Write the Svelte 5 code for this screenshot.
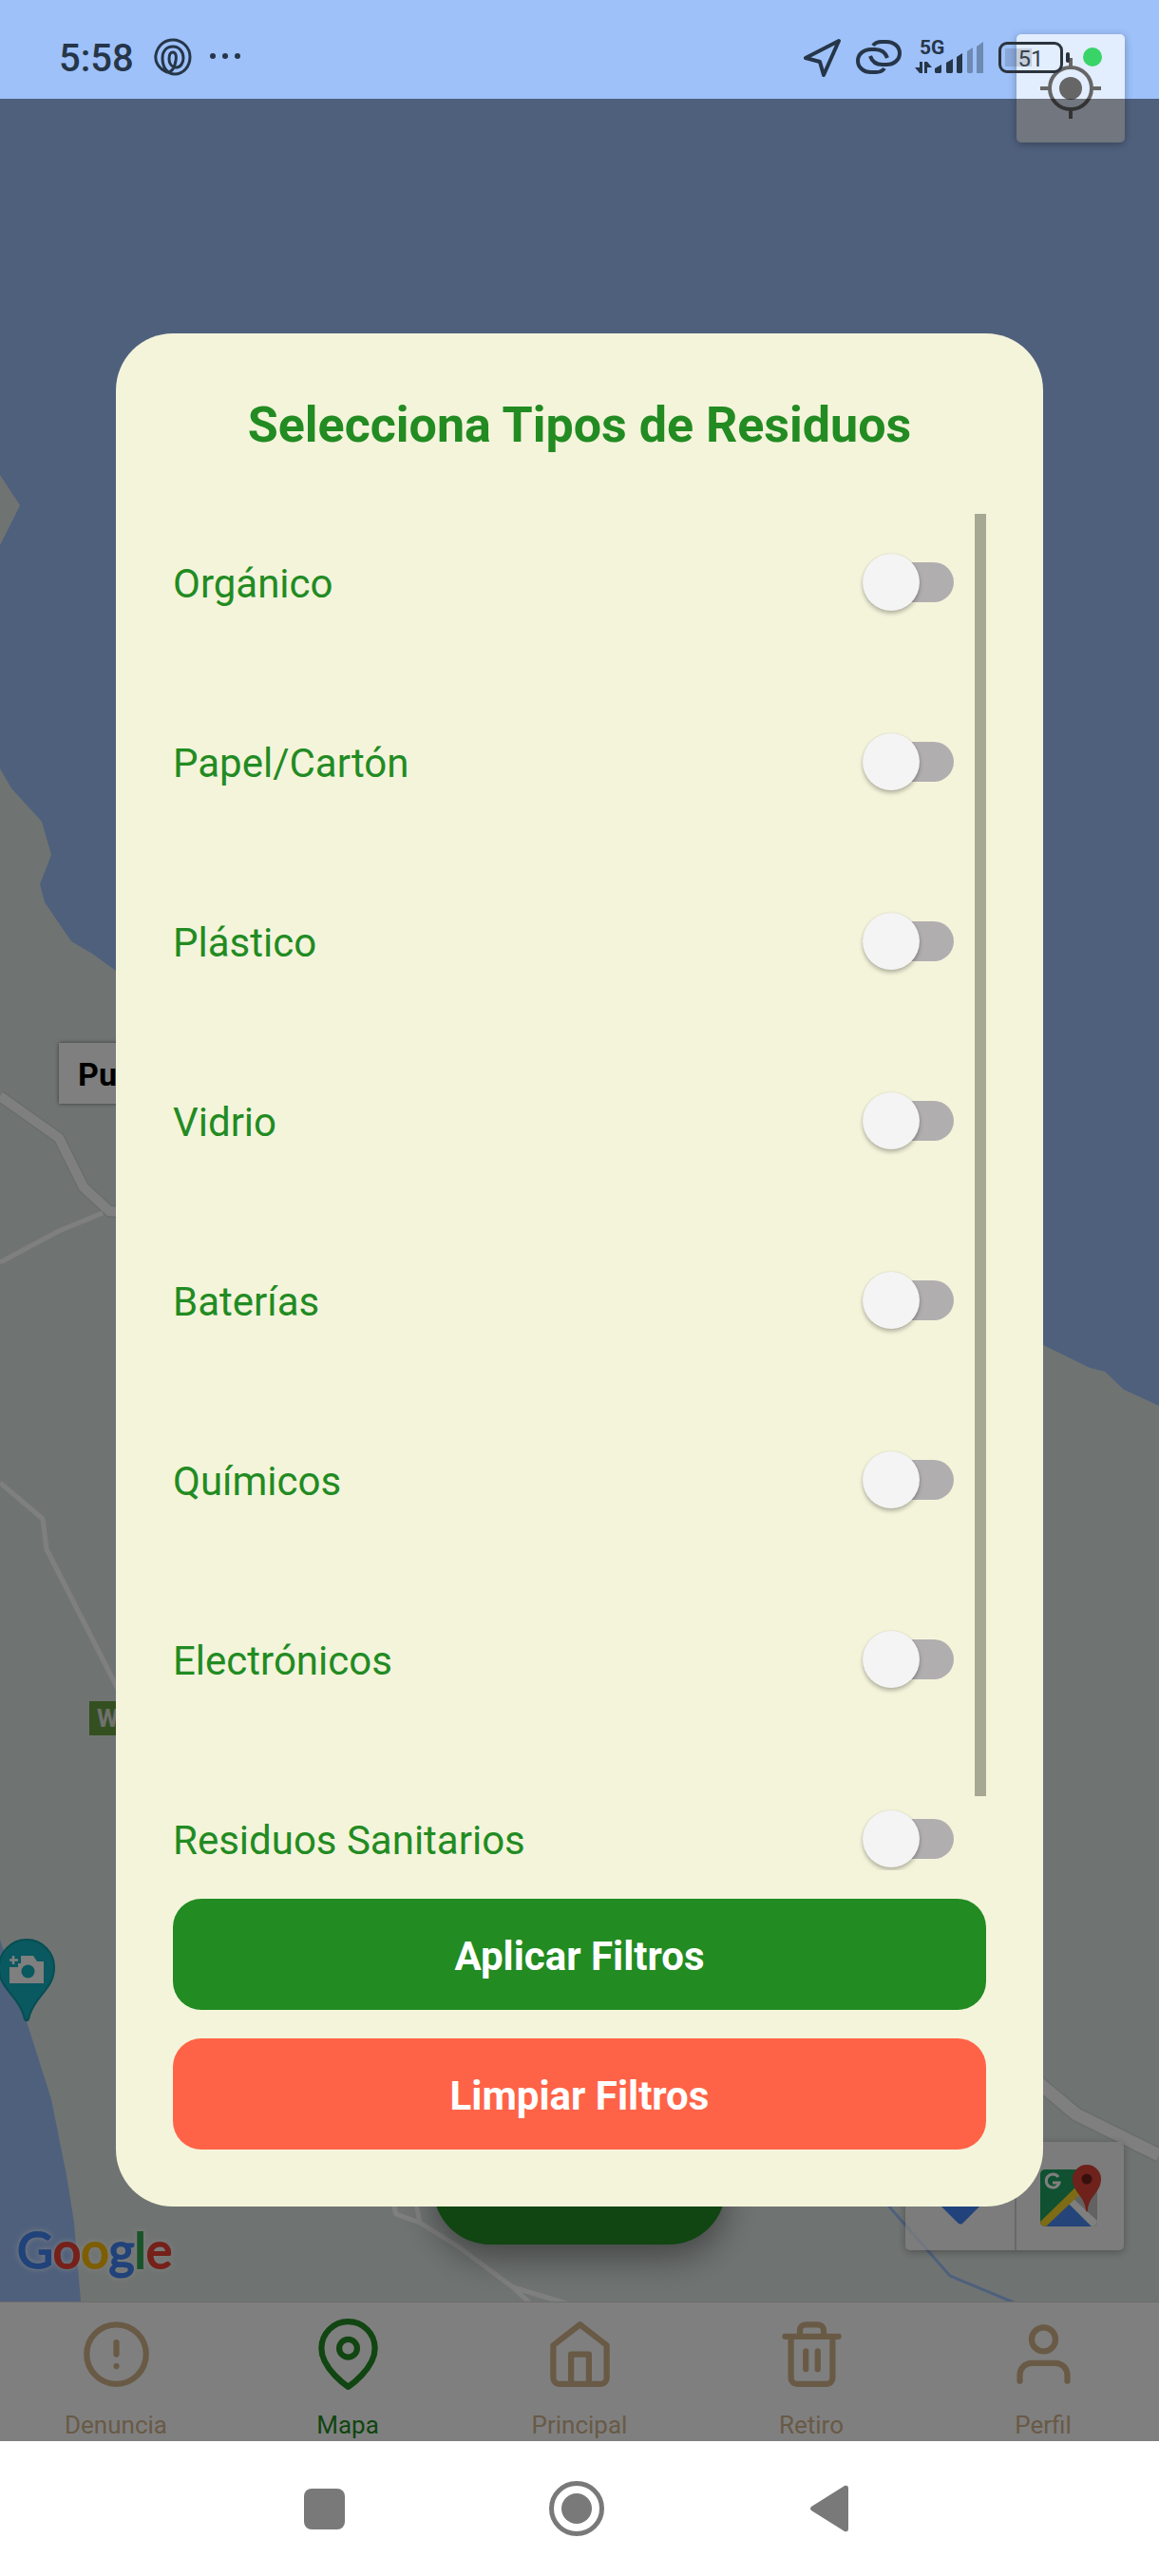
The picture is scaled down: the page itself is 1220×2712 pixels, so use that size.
<script>
  const wasteTypes = [
    'Orgánico',
    'Papel/Cartón',
    'Plástico',
    'Vidrio',
    'Baterías',
    'Químicos',
    'Electrónicos',
    'Residuos Sanitarios'
  ];

  const tabs = [
    { id: 'denuncia', label: 'Denuncia' },
    { id: 'mapa', label: 'Mapa' },
    { id: 'principal', label: 'Principal' },
    { id: 'retiro', label: 'Retiro' },
    { id: 'perfil', label: 'Perfil' }
  ];

  let selected = $state([]);
  let activeTab = $state('mapa');
  let viewHeight = $state(1);
  let contentHeight = $state(1);
  let scrollTop = $state(0);

  let barHeight = $derived(Math.min(100, (viewHeight / contentHeight) * 100));
  let barTop = $derived((scrollTop / contentHeight) * 100);
</script>

<div class="screen">
  <main class="map">
    <svg class="terrain" viewBox="0 0 1220 2423" preserveAspectRatio="xMidYMid slice" aria-hidden="true">
      <rect width="1220" height="2423" fill="#9ec1fa" />
      <g fill="#dfe8e5">
        <path d="M0 500 21 532 0 574Z" />
        <path d="M0 809 12 830 44 865 54 900 42 931 47 950 75 991 97 1004 122 1022 600 1260 1098 1416 1147 1440 1163 1444 1183 1463 1220 1480V2423H0Z" />
      </g>
      <path d="M0 2042 28 2128 54 2210 70 2290 78 2340 85 2423H0Z" fill="#9ec1fa" />
      <path d="M935 2322 1000 2396 1067 2424" fill="none" stroke="#9ec1fa" stroke-width="3" />
      <g fill="none" stroke="#d3dad8" stroke-linejoin="round">
        <path d="M0 1154 62 1198 88 1250 115 1275 135 1277" stroke-width="13" />
        <path d="M1090 2190 1133 2226 1220 2269" stroke-width="16" />
      </g>
      <g fill="none" stroke="#fff" stroke-linejoin="round">
        <path d="M0 1154 62 1198 88 1250 115 1275 135 1277" stroke-width="10" />
        <path d="M1090 2190 1133 2226 1220 2269" stroke-width="13" />
        <path d="M0 1329 62 1296 108 1277M0 1561 45 1599 49 1631 125 1780" stroke-width="5" />
        <path d="M414 2320 417 2331 442 2340 482 2365 540 2408 558 2425M438 2320 442 2340M540 2408 596 2425" stroke-width="5" />
      </g>
      <g>
        <path d="M28 2042a29 29 0 0 1 29 30c0 22-20 29-26 50-1 7-5 7-6 0-6-21-26-28-26-50a29 29 0 0 1 29-30Z" fill="#14b1c0" stroke="#0e9ba5" stroke-width="2" />
        <path fill="#fff" d="M22 2059h13l4 6h7v23H10v-17h9v-4h3Z" />
        <circle cx="29.500" cy="2075.500" r="7" fill="#14b1c0" />
        <path d="M14 2059v9M10 2063.500h9" stroke="#fff" stroke-width="2.500" />
      </g>
      <text x="18" y="2388" class="google"><tspan class="blue">G</tspan><tspan class="red">o</tspan><tspan class="yellow">o</tspan><tspan class="blue">g</tspan><tspan class="green">l</tspan><tspan class="red">e</tspan></text>
    </svg>

    <span class="pin-label">Pu</span>
    <span class="road-sign">W</span>

    <button class="map-card locate" aria-label="Mi ubicación">
      <svg viewBox="0 0 64 64" width="64" height="64" aria-hidden="true">
        <circle cx="32" cy="32" r="22" fill="none" stroke="#666" stroke-width="4" />
        <circle cx="32" cy="32" r="12" fill="#666" />
        <path d="M32 0v9M32 55v9M0 32h9M55 32h9" stroke="#666" stroke-width="4" />
      </svg>
    </button>

    <button class="fab" aria-label="Filtros"></button>

    <div class="map-card links">
      <button aria-label="Cómo llegar">
        <svg viewBox="0 0 60 60" width="60" height="60" aria-hidden="true">
          <path d="M27 2q3-3 6 0l25 25q3 3 0 6L33 58q-3 3-6 0L2 33q-3-3 0-6Z" fill="#4285f4" />
        </svg>
      </button>
      <button aria-label="Abrir en Google Maps">
        <svg viewBox="0 0 68 68" width="68" height="68" aria-hidden="true">
          <rect x="2" y="6" width="60" height="60" rx="5" fill="#1ea362" />
          <path d="M62 12 32 42 56 66q6 0 6-6Z" fill="#c5c5c5" />
          <path d="M32 42 8 66h48Z" fill="#4a89f3" />
          <path d="M32 42 56 66q6 0 6-6L36 36Z" fill="#fff" />
          <path d="M42 22 2 61q0 5 6 5L46 30Z" fill="#fcd72a" />
          <path d="M21 14a7 7 0 1 0 1 6h-7" fill="none" stroke="#fff" stroke-width="3" />
          <path d="M51 1a15 15 0 0 1 15 15c0 14-13 18-14 33q-1 3-2 0C49 34 36 30 36 16A15 15 0 0 1 51 1Z" fill="#dc4437" />
          <circle cx="51" cy="16" r="5.500" fill="#6f211a" />
        </svg>
      </button>
    </div>
  </main>

  <nav class="tabs" aria-label="Secciones">
    {#each tabs as tab}
      <button class:active={tab.id === activeTab} onclick={() => (activeTab = tab.id)}>
        <svg class="tab-icon" viewBox="0 0 24 24" aria-hidden="true">
          {#if tab.id === 'denuncia'}
            <circle cx="12" cy="12" r="10" />
            <path d="M12 8v4M12 16h.01" />
          {:else if tab.id === 'mapa'}
            <path d="M21 10c0 7-9 13-9 13s-9-6-9-13a9 9 0 0 1 18 0z" />
            <circle cx="12" cy="10" r="3" />
          {:else if tab.id === 'principal'}
            <path d="M3 9l9-7 9 7v11a2 2 0 0 1-2 2H5a2 2 0 0 1-2-2z" />
            <path d="M9 22V12h6v10" />
          {:else if tab.id === 'retiro'}
            <path d="M3 6h18M19 6v14a2 2 0 0 1-2 2H7a2 2 0 0 1-2-2V6m3 0V4a2 2 0 0 1 2-2h4a2 2 0 0 1 2 2v2M10 11v6M14 11v6" />
          {:else}
            <path d="M20 21v-2a4 4 0 0 0-4-4H8a4 4 0 0 0-4 4v2" />
            <circle cx="12" cy="7" r="4" />
          {/if}
        </svg>
        <span>{tab.label}</span>
      </button>
    {/each}
  </nav>

  <div class="system-nav">
    <button aria-label="Recientes">
      <svg viewBox="0 0 60 60" width="60" height="60" aria-hidden="true"><rect x="9" y="9" width="43" height="43" rx="8" /></svg>
    </button>
    <button aria-label="Inicio">
      <svg viewBox="0 0 60 60" width="60" height="60" aria-hidden="true">
        <circle cx="30" cy="30" r="16" />
        <circle cx="30" cy="30" r="26.500" fill="none" stroke="#797979" stroke-width="5" />
      </svg>
    </button>
    <button aria-label="Atrás">
      <svg viewBox="0 0 60 60" width="60" height="60" aria-hidden="true"><path d="M11 28 46 6q4-1 4 3v42q0 4-4 3L11 32q-2-2 0-4Z" /></svg>
    </button>
  </div>

  <header class="status">
    <time>5:58</time>
    <svg viewBox="0 0 40 40" width="40" height="40" fill="none" stroke="currentColor" stroke-width="3" aria-hidden="true">
      <path d="M14 36C4 32 1 24 2 18 4 7 12 2 20 2c10 0 18 8 18 18s-7 18-16 18c-8 0-13-7-13-17C9 14 13 9 20 9c7 0 11 6 11 12 0 5-3 10-7 10-6 0-8-5-8-9 0-4 1-7 4-7s4 4 3 9c-1 6-3 12-9 12Z" />
    </svg>
    <svg viewBox="0 0 34 40" width="34" height="40" fill="currentColor" aria-hidden="true">
      <circle cx="4" cy="19" r="3" /><circle cx="17" cy="19" r="3" /><circle cx="30" cy="19" r="3" />
    </svg>
    <div class="indicators">
      <svg viewBox="0 0 42 42" width="42" height="42" fill="none" stroke="currentColor" stroke-width="4" stroke-linejoin="round" aria-hidden="true">
        <path d="M38 4 3 22l15 4 4 14Z" />
      </svg>
      <svg viewBox="0 0 48 36" width="48" height="36" fill="none" stroke="currentColor" stroke-width="4" aria-hidden="true">
        <path d="M18 6c2-3 5-4 9-4h5c8 0 14 5 14 12s-6 12-14 12h-4c-6 0-11-3-13-9" />
        <path d="M30 30c-2 3-5 4-9 4h-5C8 34 2 29 2 22s6-12 14-12h4c6 0 11 3 13 9" />
      </svg>
      <svg viewBox="0 0 74 56" width="74" height="56" fill="currentColor" aria-hidden="true">
        <text x="5" y="25" class="network">5G</text>
        <g transform="translate(0 8)">
          <path d="M5 25h3v12H5L0 31h5ZM10 25h3l5 6h-5v6h-3ZM21 32l7-4v8l-1 1h-5l-1-1ZM33 26l7-4v14l-1 1h-5l-1-1ZM44 20l6-4v20l-1 1h-4l-1-1Z" />
          <path d="M55 14l6-4v26l-1 1h-4l-1-1ZM65 9l7-5v33h-7Z" opacity=".4" />
        </g>
      </svg>
      <span class="battery">51</span>
      <span class="recording"></span>
    </div>
  </header>

  <div class="backdrop">
    <div class="dialog" role="dialog" aria-modal="true" aria-labelledby="dialog-title">
      <h1 id="dialog-title">Selecciona Tipos de Residuos</h1>
      <div class="list">
        <div class="scroller" bind:clientHeight={viewHeight} onscroll={(e) => (scrollTop = e.currentTarget.scrollTop)}>
          <div class="rows" bind:clientHeight={contentHeight}>
            {#each wasteTypes as type}
              <label>
                <span>{type}</span>
                <input type="checkbox" role="switch" value={type} bind:group={selected} />
              </label>
            {/each}
          </div>
        </div>
        <div class="scrollbar" style="height: {barHeight}%; top: {barTop}%"></div>
      </div>
      <div class="actions">
        <button class="apply">Aplicar Filtros</button>
        <button class="clear" onclick={() => (selected = [])}>Limpiar Filtros</button>
      </div>
    </div>
  </div>
</div>

<style>
  :global(body) {
    margin: 0;
  }

  .screen {
    position: relative;
    display: flex;
    flex-direction: column;
    height: 100vh;
    background: #fff;
    font-family: Roboto, 'Liberation Sans', sans-serif;
    overflow: hidden;
  }

  button {
    margin: 0;
    padding: 0;
    border: 0;
    background: none;
    font: inherit;
    color: inherit;
    cursor: pointer;
  }

  svg {
    display: block;
  }

  .map {
    position: relative;
    flex: 1;
    min-height: 0;
    overflow: hidden;
  }

  .terrain {
    width: 100%;
    height: 100%;
  }

  .google {
    font: 400 52px Lato, sans-serif;
    stroke-width: 2px;
    filter: drop-shadow(0 0 3px #fff8) drop-shadow(0 0 2px #fff8);
  }

  .blue {
    fill: #4285f4;
    stroke: #4285f4;
  }

  .red {
    fill: #ea4335;
    stroke: #ea4335;
  }

  .yellow {
    fill: #fbbc05;
    stroke: #fbbc05;
  }

  .green {
    fill: #34a853;
    stroke: #34a853;
  }

  .pin-label {
    position: absolute;
    top: 1098px;
    left: 62px;
    padding: 2px 20px 0;
    background: #fff;
    box-shadow: 0 0 4px #0008;
    color: #000;
    font-size: 34px;
    font-weight: 700;
    line-height: 62px;
  }

  .road-sign {
    position: absolute;
    top: 1791px;
    left: 94px;
    padding: 0 8px;
    background: #6aa040;
    color: #e0e0e0;
    font-size: 26px;
    font-weight: 700;
    line-height: 36px;
  }

  .map-card {
    position: absolute;
    display: flex;
    height: 114px;
    border-radius: 5px;
    background: rgba(255, 255, 255, 0.7);
    box-shadow: 0 2px 8px rgba(0, 0, 0, 0.3);
  }

  .locate {
    top: 36px;
    right: 36px;
    width: 114px;
    align-items: center;
    justify-content: center;
  }

  .links {
    right: 37px;
    bottom: 54px;
  }

  .links button {
    display: grid;
    place-items: center;
    width: 115px;
  }

  .links button + button {
    box-sizing: border-box;
    border-left: 2px solid #ccd2d1;
  }

  .fab {
    position: absolute;
    bottom: 60px;
    left: 50%;
    width: 308px;
    height: 120px;
    margin-left: -154px;
    border-radius: 60px;
    background: #228b22;
    box-shadow: 0 14px 36px rgba(0, 0, 0, 0.4);
  }

  .tabs {
    display: flex;
    height: 147px;
    box-sizing: border-box;
    border-top: 1px solid #d8d8d8;
    background: #fff;
    color: #d2b48c;
  }

  .tabs button {
    display: flex;
    flex: 1;
    flex-direction: column;
    align-items: center;
    gap: 22px;
    padding-top: 17px;
    font-size: 26px;
    line-height: 30px;
  }

  .tabs .active {
    color: #228b22;
  }

  .tab-icon {
    flex: none;
    width: 75px;
    height: 75px;
    fill: none;
    stroke: currentColor;
    stroke-width: 2;
    stroke-linecap: round;
    stroke-linejoin: round;
  }

  .system-nav {
    display: flex;
    align-items: center;
    justify-content: center;
    gap: 206px;
    height: 142px;
    padding-right: 6px;
    background: #fff;
  }

  .system-nav svg {
    fill: #797979;
  }

  .status {
    position: absolute;
    top: 0;
    left: 0;
    right: 0;
    display: flex;
    align-items: center;
    height: 104px;
    box-sizing: border-box;
    padding: 16px 60px 0 62px;
    color: #263649;
    pointer-events: none;
  }

  .status time {
    margin-right: 21px;
    padding-top: 4px;
    font-size: 40px;
    font-weight: 500;
    line-height: 48px;
  }

  .status time + svg {
    margin-right: 18px;
  }

  .indicators {
    display: flex;
    align-items: center;
    margin-left: auto;
  }

  .indicators svg {
    margin-right: 14px;
  }

  .network {
    font-size: 21px;
    font-weight: 700;
  }

  .battery {
    position: relative;
    width: 62px;
    height: 27px;
    margin-right: 21px;
    border: 3px solid #2b333c;
    border-radius: 9px;
    background: linear-gradient(#0002, #0002) 4px 4px / 28px 19px no-repeat;
    color: #39424c;
    font-size: 24px;
    line-height: 30px;
    text-align: center;
  }

  .battery::after {
    content: '';
    position: absolute;
    top: 8px;
    right: -10px;
    width: 4px;
    height: 11px;
    border-radius: 2px;
    background: #2b333c;
  }

  .recording {
    width: 20px;
    height: 20px;
    border-radius: 50%;
    background: #38d467;
  }

  .backdrop {
    position: absolute;
    inset: 104px 0 142px;
    display: flex;
    align-items: center;
    justify-content: center;
    background: rgba(0, 0, 0, 0.5);
  }

  .dialog {
    display: flex;
    flex-direction: column;
    width: 80%;
    height: 80%;
    box-sizing: border-box;
    padding: 60px;
    border-radius: 60px;
    background: #f4f4db;
    color: #228b22;
  }

  h1 {
    margin: 0 0 56px;
    font-size: 52px;
    font-weight: 700;
    line-height: 74px;
    text-align: center;
  }

  .list {
    position: relative;
    flex: 1;
    min-height: 0;
  }

  .scroller {
    height: 100%;
    overflow-y: auto;
    scrollbar-width: none;
  }

  .rows {
    display: flow-root;
  }

  .rows label {
    display: flex;
    align-items: center;
    justify-content: space-between;
    height: 144px;
    margin-bottom: 45px;
    padding-right: 34px;
    font-size: 42px;
    line-height: 56px;
  }

  .rows span {
    padding-top: 4px;
  }

  .rows input {
    position: relative;
    width: 96px;
    height: 60px;
    margin: 0;
    appearance: none;
    cursor: pointer;
  }

  .rows input::before {
    content: '';
    position: absolute;
    inset: 9px 0 9px 6px;
    border-radius: 21px;
    background: #b1aeb0;
  }

  .rows input::after {
    content: '';
    position: absolute;
    top: 0;
    left: 0;
    width: 60px;
    height: 60px;
    border-radius: 50%;
    background: #f4f4f4;
    box-shadow: 0 3px 4px rgba(0, 0, 0, 0.25), 0 0 2px rgba(0, 0, 0, 0.12);
  }

  .rows input:checked::before {
    background: #93c893;
  }

  .rows input:checked::after {
    left: 36px;
    background: #228b22;
  }

  .scrollbar {
    position: absolute;
    right: 0;
    width: 12px;
    background: #a7a894;
    pointer-events: none;
  }

  .actions {
    display: flex;
    flex-direction: column;
    gap: 30px;
    margin-top: 30px;
  }

  .actions button {
    padding: 32px 30px 28px;
    border-radius: 30px;
    color: #fff;
    font-size: 42px;
    font-weight: 700;
    line-height: 57px;
  }

  .apply {
    background: #228b22;
  }

  .clear {
    background: #ff6347;
  }
</style>
